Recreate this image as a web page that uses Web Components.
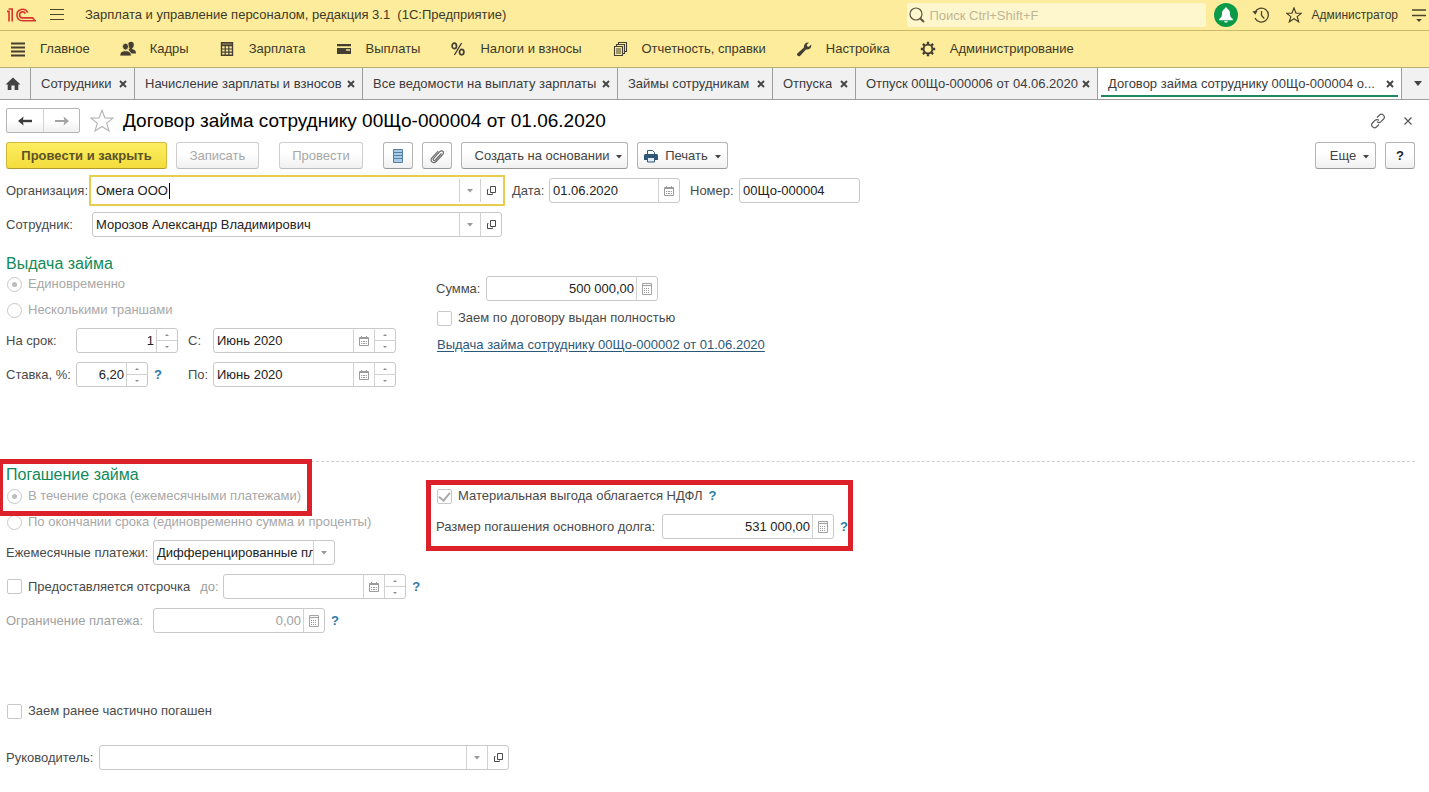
<!DOCTYPE html>
<html lang="ru">
<head>
<meta charset="utf-8">
<title>Договор займа сотруднику</title>
<style>
  html, body { margin: 0; background: #fff; }
  body { font: 13px/20px "Liberation Sans", Arial, sans-serif; color: #4a4a4a; }
</style>
</head>
<body>
<app-window>
  <title-bar slot="bars" caption="Зарплата и управление персоналом, редакция 3.1&nbsp; (1С:Предприятие)" user="Администратор"></title-bar>
  <section-menu slot="bars">
    <section-link icon="lines">Главное</section-link>
    <section-link icon="people">Кадры</section-link>
    <section-link icon="abacus">Зарплата</section-link>
    <section-link icon="card">Выплаты</section-link>
    <section-link icon="percent">Налоги и взносы</section-link>
    <section-link icon="papers">Отчетность, справки</section-link>
    <section-link icon="wrench">Настройка</section-link>
    <section-link icon="gear">Администрирование</section-link>
  </section-menu>
  <tab-strip slot="bars">
    <page-tab style="--w:104px">Сотрудники</page-tab>
    <page-tab style="--w:228px">Начисление зарплаты и взносов</page-tab>
    <page-tab style="--w:255px">Все ведомости на выплату зарплаты</page-tab>
    <page-tab style="--w:155px">Займы сотрудникам</page-tab>
    <page-tab style="--w:83px">Отпуска</page-tab>
    <page-tab style="--w:242px">Отпуск 00Що-000006 от 04.06.2020</page-tab>
    <page-tab style="--w:304px" active>Договор займа сотруднику 00Що-000004 о...</page-tab>
  </tab-strip>

  <document-header>Договор займа сотруднику 00Що-000004 от 01.06.2020</document-header>

  <command-bar>
    <tool-button kind="primary" style="--w:161px">Провести и закрыть</tool-button>
    <tool-button disabled style="--w:83px">Записать</tool-button>
    <tool-button disabled class="apart" style="--w:84px">Провести</tool-button>
    <tool-button icon="register" hint="Движения документа" class="apart" style="--w:30px"></tool-button>
    <tool-button icon="clip" hint="Файлы" style="--w:30px"></tool-button>
    <tool-button menu style="--w:167px">Создать на основании</tool-button>
    <tool-button icon="printer" menu style="--w:91px">Печать</tool-button>
    <tool-button slot="end" menu style="--w:61px">Еще</tool-button>
    <tool-button slot="end" kind="strong" style="--w:30px">?</tool-button>
  </command-bar>

  <form-stack>
    <form-row>
      <form-field label="Организация:" value="Омега ООО" tools="drop open" focused style="--label:86px;--box:410px"></form-field>
      <form-field label="Дата:" value="01.06.2020" tools="calendar" style="--label:37px;--box:131px"></form-field>
      <form-field label="Номер:" value="00Що-000004" style="--label:49px;--box:121px"></form-field>
    </form-row>
    <form-row>
      <form-field label="Сотрудник:" value="Морозов Александр Владимирович" tools="drop open" style="--label:86px;--box:410px"></form-field>
    </form-row>
  </form-stack>

  <form-section>
    <h2 slot="title">Выдача займа</h2>
    <choice-box slot="left" type="radio" checked disabled>Единовременно</choice-box>
    <choice-box slot="left" type="radio" disabled>Несколькими траншами</choice-box>
    <form-stack slot="left">
      <form-row>
        <form-field label="На срок:" value="1" numeric tools="spin" style="--label:70px;--box:102px"></form-field>
        <form-field label="С:" value="Июнь 2020" tools="calendar spin" style="--label:25px;--box:183px"></form-field>
      </form-row>
      <form-row>
        <form-field label="Ставка, %:" value="6,20" numeric tools="spin" help style="--label:70px;--box:72px;--after:10px"></form-field>
        <form-field label="По:" value="Июнь 2020" tools="calendar spin" style="--label:25px;--box:183px"></form-field>
      </form-row>
    </form-stack>
    <form-field slot="right" label="Сумма:" value="500 000,00" numeric tools="calc" style="--label:50px;--box:172px"></form-field>
    <choice-box slot="right" type="checkbox">Заем по договору выдан полностью</choice-box>
    <doc-link slot="right">Выдача займа сотруднику 00Що-000002 от 01.06.2020</doc-link>
  </form-section>

  <form-section divided>
    <call-out slot="title">
      <h2>Погашение займа</h2>
      <choice-box type="radio" checked disabled>В течение срока (ежемесячными платежами)</choice-box>
    </call-out>
    <choice-box slot="left" type="radio" disabled>По окончании срока (единовременно сумма и проценты)</choice-box>
    <form-stack slot="left">
      <form-field label="Ежемесячные платежи:" value="Дифференцированные платежи" select tools="drop" style="--label:147px;--box:182px"></form-field>
      <form-row>
        <choice-box type="checkbox">Предоставляется отсрочка</choice-box>
        <form-field label="до:" value="" tools="calendar spin" help dim style="--label:23px;--box:183px"></form-field>
      </form-row>
      <form-field label="Ограничение платежа:" value="0,00" numeric tools="calc" help dim style="--label:147px;--box:172px"></form-field>
    </form-stack>
    <call-out slot="right">
      <choice-box type="checkbox" checked muted help>Материальная выгода облагается НДФЛ</choice-box>
      <form-field label="Размер погашения основного долга:" value="531 000,00" numeric tools="calc" help style="--label:226px;--box:172px"></form-field>
    </call-out>
  </form-section>

  <form-footer>
    <choice-box type="checkbox">Заем ранее частично погашен</choice-box>
    <form-field label="Руководитель:" value="" tools="drop open" style="--label:93px;--box:410px"></form-field>
  </form-footer>
</app-window>

<script>
const star = 'M0-10 2.6-3.2 9.8-3 4.2 1.5 6.2 8.4 0 4.4-6.2 8.4-4.2 1.5-9.8-3-2.6-3.2Z';
const icons = {
  logo: [30, 16, `<g fill="none" stroke="#d8362c" stroke-width="1.6"><path d="M1 4.400H3V14.500"/><path d="M2.600 2H6.200V14.500"/><path d="M21.800 5.600A5.700 5.700 0 1 0 16.500 13.700H30"/><path d="M19.300 6.600A3 3 0 1 0 16.500 10.900H26.500L28.500 13"/></g>`],
  burger: [16, 14, '<path d="M1 1.500H15M1 6.500H15M1 11.500H15" stroke="#4b452c" stroke-width="1.200"/>'],
  search: [16, 16, '<circle cx="7" cy="7" r="6" fill="none" stroke="#5b5540" stroke-width="1.200"/><path d="m11.300 11.500 3.700 3.500" stroke="#5b5540" stroke-width="2"/>'],
  bell: [24, 24, '<circle cx="12" cy="12" r="12" fill="#0a9a48"/><path fill="#fff" d="M12 4.600c.9 0 1.400.7 1.400 1.400 1.800.8 2.600 2.600 2.600 4.400 0 3 1 4.300 2.800 5.600v1.200H5.200V16C7 14.700 8 13.400 8 10.400 8 8.600 8.800 6.800 10.600 6c0-.7.500-1.400 1.400-1.400ZM10.200 18h3.600a1.800 1.500 0 0 1-3.600 0Z"/>'],
  history: [18, 18, '<g fill="none" stroke="#4b452c" stroke-width="1.300"><path d="M3 6.200A7 7 0 1 1 3 12"/><path d="M9.500 5v4.500l2.800 3"/></g><path d="M.4 5.300 5.600 4.800 3.300 8.800Z" fill="#4b452c"/>'],
  star: [16, 16, `<path transform="translate(8 8.500) scale(.76)" d="${star}" fill="none" stroke="#4b452c" stroke-width="1.600"/>`],
  bigstar: [24, 24, `<path transform="translate(12 12.500) scale(1.120)" d="${star}" fill="#fff" stroke="#b4b4b4" stroke-width="1"/>`],
  settings: [16, 16, '<path d="M1 3H15M1 8.500H15" stroke="#4b452c" stroke-width="1.300"/><path d="M5.200 12h5.600L8 15Z" fill="#4b452c"/>'],
  lines: [16, 16, '<path d="M1 2.500H15M1 6.500H15M1 10.500H15M1 14.500H15" stroke="#453f33" stroke-width="1.800"/>'],
  people: [16, 16, '<g fill="#453f33"><ellipse cx="11" cy="4" rx="2.800" ry="3.300"/><path d="M8.500 8.500 10 7h2l.5 1.200c2.300.6 3.500 1.500 3.500 4.300h-5Z"/><g stroke="#fcec9c" stroke-width=".8"><ellipse cx="5.500" cy="5.600" rx="3" ry="3.400"/><path d="M0 15v-1.500C0 11 2 10.400 4 9.800h3c2 .6 4.200 1.200 4.200 3.700V15Z"/></g></g>'],
  abacus: [16, 16, '<path fill="none" stroke="#453f33" stroke-width="1.400" d="M2.500 1.700h11v12.600h-11Z"/><path stroke="#453f33" stroke-width="1.200" d="M2 4.700H14M2 8H14M2 11.200H14M6.200 5V14M9.800 5V14M3 3.200H13"/>'],
  card: [16, 16, '<path fill="#453f33" d="M1 3h14v2.300H1ZM1 7h14v6H1Z"/><path d="M10 9h4" stroke="#fcec9c" stroke-width="1.400"/>'],
  percent: [16, 16, '<g fill="none" stroke="#453f33" stroke-width="1.700"><ellipse cx="4.300" cy="4.900" rx="2.200" ry="2.700"/><ellipse cx="11.700" cy="11.100" rx="2.200" ry="2.700"/><path d="M11.600 2 4.400 14" stroke-width="1.400"/></g>'],
  papers: [16, 16, '<g fill="none" stroke="#453f33" stroke-width="1.100"><path d="M2.500 5.500h8v9h-8Z"/><path d="M4.500 5.300V3.500h8v9h-1.800M6.500 3.300V1.500h8v9h-1.800"/><path d="M4 8h5M4 10h5M4 12h5"/></g>'],
  wrench: [16, 16, '<path d="M1.300 12.400 8 6.600C7.400 3.800 9.600.9 12.900 1.500L10.800 3.800 11.300 5.400 13 5.800 15.200 3.500C15.900 6.800 13 9.200 10 8.500L4 15C2.500 16.200.1 14 1.300 12.400Z" fill="#453f33"/>'],
  gear: [16, 16, '<circle cx="8" cy="8" r="4.400" fill="none" stroke="#453f33" stroke-width="1.900"/><g stroke="#453f33" stroke-width="2.400"><path d="M8 .8V3.200M8 12.800V15.200M.8 8H3.200M12.800 8H15.200M2.900 2.900 4.600 4.600M11.400 11.400 13.100 13.100M2.900 13.100 4.600 11.400M11.400 4.600 13.100 2.900"/></g>'],
  home: [16, 16, '<path fill="#444" d="M8 1.500 15.500 8.500H13.300V14H9.600V9.500H6.400V14H2.700V8.500H.5Z"/>'],
  cross: [8, 8, '<path d="m1 1 6 6M7 1 1 7" stroke="#444" stroke-width="1.900"/>'],
  thincross: [10, 10, '<path d="m1.500 1.500 7 7M8.500 1.500l-7 7" stroke="#555" stroke-width="1.200"/>'],
  back: [16, 12, '<path d="M15 6H4" stroke="#3c3c3c" stroke-width="2.400"/><path d="M1 6 6.600 1.500 5.800 6 6.600 10.500Z" fill="#3c3c3c"/>'],
  forward: [16, 12, '<path d="M1 6H12" stroke="#a4a4a4" stroke-width="2"/><path d="M15 6 9.600 1.500 10.400 6 9.600 10.500Z" fill="#a4a4a4"/>'],
  chain: [16, 16, '<g fill="none" stroke="#5a5a5a" stroke-width="1.200"><path d="M7 4.500 9.600 2C12-.2 16 3.200 13.600 6L11 8.600C9.800 9.800 8 9.600 7 8.600"/><path d="M9 11.500 6.400 14C4 16.200 0 12.800 2.400 10L5 7.400C6.200 6.200 8 6.400 9 7.400"/></g>'],
  register: [12, 16, '<path fill="#a9cbe8" stroke="#5580a6" d="M1.500 1.500h9v13h-9Z"/><path stroke="#5580a6" d="M1.500 4.500h9M1.500 7.500h9M1.500 10.500h9"/>'],
  clip: [16, 16, '<path fill="none" stroke="#6b6b6b" stroke-width="1.200" d="M12.500 5.500 6.400 12C5 13.300 3.300 11.700 4.600 10.300L10.800 3.700C12.900 1.500 15.800 4 13.800 6.300L7.100 13.500C4.400 16.300.3 12.800 2.900 9.900L9.200 3.200"/>'],
  printer: [14, 14, '<path fill="#fff" stroke="#2f5876" d="M3.500 5.500v-4h5l2 2v2"/><path fill="#2f5876" d="M1.500 5h11c.8 0 1.500.7 1.500 1.500V11H0V6.500C0 5.700.7 5 1.500 5Z"/><path fill="#dcebf5" stroke="#2f5876" d="M3.500 8.500h7v4.500h-7Z"/>'],
  menu: [6, 4, '<path d="M0 0H6L3 3.500Z" fill="#444"/>'],
  drop: [6, 4, '<path d="M0 0H6L3 3.500Z" fill="#9a9a9a"/>'],
  tabs: [8, 5, '<path d="M0 0H8L4 5Z" fill="#444"/>'],
  open: [11, 11, '<path fill="none" stroke="#4a4a4a" d="M4.500 1.500H9.500V7.500H4.500ZM2.500 4.500H1.500V9.500H6.500V8.500"/>'],
  calendar: [10, 10, '<path fill="none" stroke="#9b9b9b" d="M.5 1.500h9v8h-9Z"/><path stroke="#9b9b9b" d="M0 2.500H10M2.500 0V3M7.500 0V3M2 5.500H8M2 7.500H8"/><path stroke="#fff" d="M3.500 5V8M6.500 5V8" stroke-width=".8"/>'],
  calc: [10, 12, '<path fill="none" stroke="#a4a4a4" d="M.5 .5h9v11h-9Z"/><path stroke="#a4a4a4" d="M0 2.500H10" stroke-width="1.200"/><path stroke="#9b9b9b" stroke-dasharray="1 1" d="M2 5.500H8M2 7.500H8M2 9.500H8"/>'],
  up: [4, 2, '<path d="M0 2H4L2 0Z" fill="#8c8c8c"/>'],
  down: [4, 2, '<path d="M0 0H4L2 2Z" fill="#8c8c8c"/>'],
};
const icon = name => {
  const [w, h, body] = icons[name];
  return `<svg class="i-${name}" width="${w}" height="${h}" viewBox="0 0 ${w} ${h}" aria-hidden="true">${body}</svg>`;
};
const reset = `*,*::before{box-sizing:border-box} svg{display:block;flex:none} button,input,select{font:inherit;color:inherit;margin:0;padding:0;border:0;background:none;border-radius:0} button{display:flex;align-items:center;justify-content:center}`;

/* Registers an element whose shadow root is built once from view(element). */
const define = (name, css, view) => customElements.define(name, class extends HTMLElement {
  connectedCallback() {
    if (this.shadowRoot) return;
    this.attachShadow({ mode: 'open' }).innerHTML = `<style>${reset}${css}</style>${view(this)}`;
  }
});

define('app-window', `
  :host{display:block}
  main{padding:8px 14px 20px 6px}`,
  () => `<header><slot name="bars"></slot></header><main><slot></slot></main>`);

define('title-bar', `
  :host{display:flex;align-items:center;height:31px;padding:0 2px 0 6px;background:#fcec9c;border-bottom:1px solid #c9b968;color:#3d3a2a;box-sizing:border-box}
  .main{margin:0 20px 0 13px}
  .name{flex:1;white-space:nowrap}
  .search{display:flex;align-items:center;gap:4px;width:299px;height:24px;padding-left:2px;background:#fef6cd;border-radius:2px}
  input{flex:1;min-width:0;height:22px;outline:0}
  input::placeholder{color:#bdb695;opacity:1}
  .bell{margin:0 14px 0 8px}
  .hist{margin-right:16px}
  .user{font-size:12px;margin:0 13px 0 9px}`,
  el => `${icon('logo')}<button class="main" aria-label="Меню">${icon('burger')}</button>
    <span class="name">${el.getAttribute('caption')}</span>
    <label class="search">${icon('search')}<input type="search" aria-label="Поиск" placeholder="Поиск Ctrl+Shift+F"></label>
    <button class="bell" aria-label="Уведомления">${icon('bell')}</button>
    <button class="hist" aria-label="История">${icon('history')}</button>
    <button aria-label="Избранное">${icon('star')}</button>
    <button class="user">${el.getAttribute('user')}</button>
    <button aria-label="Настройки">${icon('settings')}</button>`);

define('section-menu', `
  :host{display:block;background:#fcec9c;border-bottom:1px solid #b9ad72}
  nav{display:flex;align-items:center;gap:30px;height:36px;padding-left:10px}`,
  () => `<nav><slot></slot></nav>`);

define('section-link', `
  :host{display:block}
  a{display:flex;align-items:center;gap:14px;color:#3d3a2a;text-decoration:none;white-space:nowrap}`,
  el => `<a href="#">${icon(el.getAttribute('icon'))}<slot></slot></a>`);

define('tab-strip', `
  :host{display:flex;height:32px;background:#f1f1f1;border-bottom:1px solid #9d9d9d;box-sizing:border-box}
  .home{width:30px;padding-right:5px}
  .more{flex:1;min-width:27px;border-left:1px solid #9d9d9d;padding-left:5px}`,
  () => `<button class="home" aria-label="Начальная страница">${icon('home')}</button><slot></slot><button class="more" aria-label="Все вкладки">${icon('tabs')}</button>`);

define('page-tab', `
  :host{display:flex;align-items:center;justify-content:space-between;flex:0 1 var(--w);min-width:0;padding:0 7px 0 10px;border-left:1px solid #9d9d9d;box-sizing:border-box;position:relative}
  :host([active]){background:#fff}
  :host([active])::after{content:"";position:absolute;left:3px;right:3px;bottom:2px;height:2px;background:#1f8a5f}
  a{color:#3c3c3c;text-decoration:none;white-space:nowrap;overflow:hidden}`,
  () => `<a href="#"><slot></slot></a><button aria-label="Закрыть вкладку">${icon('cross')}</button>`);

define('document-header', `
  :host{display:flex;align-items:center;height:25px}
  .nav{display:flex;height:25px;border:1px solid #b5b5b5;border-radius:2px;background:linear-gradient(#fff 50%,#f0f0f0)}
  .nav button{width:36px}
  .nav button+button{border-left:1px solid #d2d2d2}
  .fav{margin:0 9px 0 10px}
  h1{flex:1;margin:0;font:19px/24px "Liberation Sans",Arial,sans-serif;color:#000;white-space:nowrap}
  .link{margin-right:17px}
  .close{margin-right:2px}`,
  () => `<div class="nav"><button aria-label="Назад">${icon('back')}</button><button aria-label="Вперед">${icon('forward')}</button></div>
    <button class="fav" aria-label="В избранное">${icon('bigstar')}</button><h1><slot></slot></h1>
    <button class="link" aria-label="Получить ссылку">${icon('chain')}</button><button class="close" aria-label="Закрыть">${icon('thincross')}</button>`);

define('command-bar', `
  :host{display:flex;gap:9px;margin:9px 0}
  .space{flex:1}
  ::slotted(.apart){margin-left:11px}`,
  () => `<slot></slot><span class="space"></span><slot name="end"></slot>`);

define('tool-button', `
  :host{display:block;flex:none;width:var(--w)}
  button{width:100%;height:27px;gap:7px;border:1px solid #b4b4b4;border-bottom-color:#999;border-radius:3px;background:linear-gradient(#fff 40%,#f0f0f0);color:#444;white-space:nowrap}
  :host([menu]:not([icon])) button{padding-left:8px}
  button:disabled{color:#a8a8a8;border-color:#cfcfcf #cfcfcf #bdbdbd}
  :host([kind=primary]) button{font-weight:700;color:#5c5327;border-color:#d0b93c #d0b93c #b09a2a;background:linear-gradient(#fdee62,#f3dc3c)}
  :host([kind=strong]) button{font-weight:700;color:#222}
  .i-menu{margin-top:2px}`,
  el => `<button type="button"${el.hasAttribute('disabled') ? ' disabled' : ''}${el.getAttribute('hint') ? ` aria-label="${el.getAttribute('hint')}"` : ''}>${el.getAttribute('icon') ? icon(el.getAttribute('icon')) : ''}<slot></slot>${el.hasAttribute('menu') ? icon('menu') : ''}</button>`);

define('form-stack', `:host{display:flex;flex-direction:column;gap:9px}::slotted(*){flex:none}`, () => `<slot></slot>`);
define('form-row', `:host{display:flex;align-items:center;gap:10px}`, () => `<slot></slot>`);

const tools = {
  drop: `<button type="button" aria-label="Выбрать">${icon('drop')}</button>`,
  open: `<button type="button" aria-label="Открыть">${icon('open')}</button>`,
  calendar: `<button type="button" aria-label="Календарь">${icon('calendar')}</button>`,
  calc: `<button type="button" aria-label="Калькулятор">${icon('calc')}</button>`,
  spin: `<span class="spin"><button type="button" aria-label="Больше">${icon('up')}</button><button type="button" aria-label="Меньше">${icon('down')}</button></span>`,
};
const helpCss = `.help{font-weight:700;color:#2b7da8;width:20px;height:20px;margin-right:var(--after,0)}`;
const helpButton = `<button type="button" class="help" aria-label="Справка">?</button>`;

define('form-field', `
  :host{display:flex;align-items:center;height:25px}
  label{flex:none;width:var(--label);white-space:nowrap}
  .box{position:relative;display:flex;width:var(--box);height:25px;border:1px solid #c9c9c9;border-radius:3px;background:#fff;color:#222}
  :host([focused]) .box{outline:2px solid #e6cd4c;outline-offset:1px;border-color:#fff;border-radius:0}
  input,select{flex:1;min-width:0;width:0;height:23px;padding:0 3px;outline:0;appearance:none;overflow:hidden;text-overflow:clip}
  select{padding-right:0}
  :host([numeric]) input{text-align:right;padding-right:2px}
  .box>button,.spin{flex:none;width:21px;border-left:1px solid #d2d2d2}
  .spin{display:flex;flex-direction:column}
  .spin button{flex:1;width:100%}
  .spin button+button{border-top:1px solid #d2d2d2}
  :host([dim]) label,:host([dim]) input{color:#a0a0a0}
  .caret{position:absolute;left:76px;top:4px;width:1px;height:16px;background:#000}
  ${helpCss}`,
  el => {
    const value = el.getAttribute('value');
    const control = el.hasAttribute('select')
      ? `<select id="c"><option>${value}</option></select>`
      : `<input id="c" type="text" value="${value}">`;
    const buttons = (el.getAttribute('tools') || '').split(' ').filter(Boolean).map(t => tools[t]).join('');
    return `<label for="c">${el.getAttribute('label')}</label><div class="box">${control}${buttons}${el.hasAttribute('focused') ? '<span class="caret"></span>' : ''}</div>${el.hasAttribute('help') ? helpButton : ''}`;
  });

define('choice-box', `
  :host{display:flex;align-items:center;height:20px}
  label{display:flex;align-items:center;gap:6px;white-space:nowrap}
  input{appearance:none;flex:none;width:15px;height:15px;margin-left:1px;border:1px solid #c8c8c8;border-radius:2px;background:#fff;display:grid;place-items:center}
  input[type=radio]{border-radius:50%}
  input[type=radio]:checked::after{content:"";width:5px;height:5px;border-radius:50%;background:#bdbdbd}
  input[type=checkbox]:checked::after{content:"";width:5px;height:9px;margin-bottom:3px;border:solid #aaa;border-width:0 2px 2px 0;transform:rotate(40deg)}
  :host([disabled]) label{color:#a8a8a8}
  ${helpCss}`,
  el => `<label><input type="${el.getAttribute('type')}"${el.hasAttribute('checked') ? ' checked' : ''}${el.hasAttribute('disabled') || el.hasAttribute('muted') ? ' disabled' : ''}><slot></slot></label>${el.hasAttribute('help') ? helpButton : ''}`);

define('doc-link', `
  :host{display:block;height:20px;padding-left:1px}
  a{color:#2c5878;text-decoration:underline;text-underline-offset:2px}`,
  () => `<a href="#"><slot></slot></a>`);

define('form-section', `
  :host{display:grid;grid-template-columns:430px minmax(0,1fr);margin-top:17px}
  :host([divided]){margin-top:74px;padding-top:3px;border-top:1px dashed #cfcfcf}
  .left,.right{display:flex;flex-direction:column;align-items:flex-start}
  .left{gap:6px}
  .left ::slotted(form-stack){margin-top:2px}
  .right{gap:7px;padding-top:22px}
  :host([divided]) .right{padding-top:21px}
  ::slotted(h2){margin:0 0 -6px;font:16px/20px "Liberation Sans",Arial,sans-serif;color:#0f8a58}`,
  () => `<div class="left"><slot name="title"></slot><slot name="left"></slot></div><div class="right"><slot name="right"></slot></div>`);

define('call-out', `
  :host{display:flex;flex-direction:column;position:relative;width:max-content}
  :host([slot=right]){gap:8px}
  :host::after{content:"";position:absolute;inset:-6px -11px -10px -8px;border:5px solid #dd212b;pointer-events:none}
  :host([slot=right])::after{inset:-6px 1px -12px -10px}
  ::slotted(h2){margin:0 0 1px;font:16px/20px "Liberation Sans",Arial,sans-serif;color:#0f8a58}`,
  () => `<slot></slot>`);

define('form-footer', `
  :host{display:flex;flex-direction:column;gap:24px;margin-top:68px}`,
  () => `<slot></slot>`);
</script>
</body>
</html>
